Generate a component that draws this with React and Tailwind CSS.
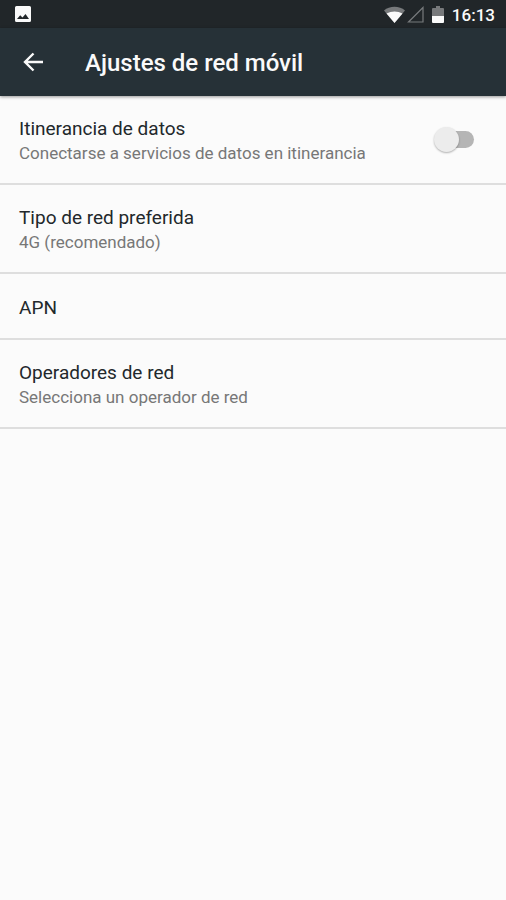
import { useState } from 'react';

const ITEMS = [
  { id: 'type', title: 'Tipo de red preferida', summary: '4G (recomendado)' },
  { id: 'apn', title: 'APN' },
  { id: 'operators', title: 'Operadores de red', summary: 'Selecciona un operador de red' },
];

function StatusBar() {
  return (
    <div className="flex h-7 items-center justify-between bg-[#212629] pr-[11px] pl-[15px] text-[#fafafa]">
      <svg viewBox="0 0 16 16" className="size-4" aria-hidden="true">
        <path
          fill="currentColor"
          fillRule="evenodd"
          d="M1.5 0h13A1.5 1.5 0 0 1 16 1.5v13a1.5 1.5 0 0 1-1.5 1.5h-13A1.5 1.5 0 0 1 0 14.5v-13A1.5 1.5 0 0 1 1.5 0ZM2 13h12L10.500 8 7.500 11.500 5.200 9.200Z"
        />
      </svg>
      <div className="flex items-center">
        {/* wifi */}
        <svg viewBox="0 0 21 17" className="h-[17px] w-[21px]" aria-hidden="true">
          <path fill="#77797b" d="M0 4.500C5.500-.5 15.500-.5 21 4.500L10.500 17Z" />
          <path fill="currentColor" d="M2.500 7.500C7.500 4.800 13.500 4.800 18.500 7.500L10.500 17Z" />
        </svg>
        {/* no mobile signal */}
        <svg viewBox="0 0 17 17" className="ml-0.5 size-[17px]" aria-hidden="true">
          <path fill="none" stroke="#777a7c" strokeWidth="1.200" d="M16 1.500V16H1.500Z" />
        </svg>
        {/* battery */}
        <svg viewBox="0 0 12 17" className="ml-2 h-[17px] w-3" aria-hidden="true">
          <path fill="#77797b" d="M4 0h4v2h3a1 1 0 0 1 1 1v7H0V3a1 1 0 0 1 1-1h3Z" />
          <path fill="currentColor" d="M0 10h12v6a1 1 0 0 1-1 1H1a1 1 0 0 1-1-1Z" />
        </svg>
        <span className="ml-2 pt-0.5 text-[17px] leading-6 font-medium">16:13</span>
      </div>
    </div>
  );
}

function ItemText({ title, summary }) {
  return (
    <span className="block pt-0.5">
      <span className="block text-[19px] leading-[25px] text-[#22282b]">{title}</span>
      {summary && <span className="block text-[17px] leading-[25px] text-[#777]">{summary}</span>}
    </span>
  );
}

export default function App() {
  const [roaming, setRoaming] = useState(false);

  return (
    <div className="min-h-screen bg-[#fbfbfb] font-['Roboto',sans-serif]">
      <StatusBar />

      <header className="relative flex h-[68px] items-center bg-[#263137] pl-[21px] text-[#fafafa] shadow-[0_1px_3px_rgba(0,0,0,0.4)]">
        <button type="button" aria-label="Atrás" className="flex size-6 items-center justify-center">
          <svg viewBox="0 0 20 20" className="size-5" aria-hidden="true">
            <path fill="none" stroke="currentColor" strokeWidth="2.400" d="M20 10H2.500M10.500 1.500 2 10l8.500 8.500" />
          </svg>
        </button>
        <h1 className="ml-10 pt-0.5 text-[24px] leading-8 font-medium">Ajustes de red móvil</h1>
      </header>

      <main>
        <label className="flex h-[89px] cursor-pointer items-center justify-between border-b-2 border-[#dedede] pr-8 pl-[19px]">
          <ItemText title="Itinerancia de datos" summary="Conectarse a servicios de datos en itinerancia" />
          <span className="relative flex h-[25px] w-10 items-center">
            <input
              type="checkbox"
              role="switch"
              checked={roaming}
              onChange={e => setRoaming(e.target.checked)}
              className="peer ml-1 h-[17px] w-9 appearance-none rounded-full bg-[#b5b5b5] checked:bg-[#80cbc4]"
            />
            <span className="absolute top-0 left-0 size-[25px] rounded-full bg-[#ececec] shadow-[0_1px_2px_rgba(0,0,0,0.3)] peer-checked:left-4 peer-checked:bg-[#009688]" />
          </span>
        </label>

        {ITEMS.map(item => (
          <button
            key={item.id}
            type="button"
            className={
              'flex w-full items-center border-b-2 border-[#dedede] px-[19px] text-left ' +
              (item.summary ? 'h-[89px]' : 'h-[66px]')
            }
          >
            <ItemText title={item.title} summary={item.summary} />
          </button>
        ))}
      </main>
    </div>
  );
}
